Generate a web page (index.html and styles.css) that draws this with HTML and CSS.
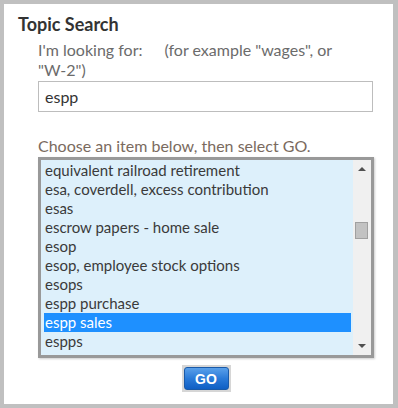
FILE: index.html
```html
<!DOCTYPE html>
<html lang="en">
<head>
    <meta charset="UTF-8">
    <title>Topic Search</title>
    <link rel="stylesheet" href="styles.css">
</head>
<body>
    <div class="panel">
        <h2 class="title">Topic Search</h2>
        <div class="form">
            <label class="label" for="topic">I'm looking for:<span class="hint">(for example "wages", or <span class="nowrap">"W-2")</span></span></label>
            <input type="text" id="topic" class="topic-input" value="espp">
            <div class="choose">Choose an item below, then select GO.</div>
            <div class="listbox">
                <div class="items">
                    <div class="item">equivalent railroad retirement</div>
                    <div class="item">esa, coverdell, excess contribution</div>
                    <div class="item">esas</div>
                    <div class="item">escrow papers - home sale</div>
                    <div class="item">esop</div>
                    <div class="item">esop, employee stock options</div>
                    <div class="item">esops</div>
                    <div class="item">espp purchase</div>
                    <div class="item selected">espp sales</div>
                    <div class="item">espps</div>
                </div>
                <div class="scrollbar">
                    <span class="arrow up"></span>
                    <span class="thumb"></span>
                    <span class="arrow down"></span>
                </div>
            </div>
            <div class="actions">
                <span class="go-wrap"><button class="go">GO</button></span>
            </div>
        </div>
    </div>
</body>
</html>
```

FILE: styles.css
```css
body {
    margin: 0;
    background-color: #c0c0c0;
    font-family: Lato, "Open Sans", sans-serif;
    font-size: 16px;
}
.panel {
    margin: 4px 5px 4px 4px;
    height: 400px;
    background-color: #fff;
    padding: 10px 0 0 14px;
    box-sizing: border-box;
}
.title {
    margin: 0;
    font-size: 18px;
    font-weight: bold;
    line-height: 20px;
    color: #333;
}
.form {
    margin: 6px 0 0 20px;
    width: 336px;
}
.label {
    display: block;
    line-height: 20px;
    color: #6b6b6b;
}
.hint {
    margin-left: 22px;
}
.nowrap {
    white-space: nowrap;
}
.topic-input {
    display: block;
    width: 335px;
    height: 31px;
    margin-top: 1px;
    box-sizing: border-box;
    border: 1px solid #bdbdbd;
    padding: 0 6px;
    font-family: inherit;
    font-size: 16px;
    color: #333;
    outline: none;
}
.choose {
    margin-top: 24px;
    line-height: 20px;
    color: #7a6a5e;
}
.listbox {
    display: flex;
    margin-top: 1px;
    width: 336px;
    height: 201px;
    box-sizing: border-box;
    border: 3px solid #999;
    background-color: #ddf0fb;
    box-shadow: 1px 1px 2px rgba(0, 0, 0, 0.2);
}
.items {
    flex: 1;
    padding: 1px 2px 0 3px;
    overflow: hidden;
}
.item {
    height: 19px;
    line-height: 19px;
    padding-left: 1px;
    font-size: 15px;
    color: #3a3a3a;
    white-space: nowrap;
}
.item.selected {
    background-color: #1e90ff;
    color: #fff;
}
.scrollbar {
    position: relative;
    width: 18px;
    background-color: #f0f0f0;
}
.arrow {
    position: absolute;
    left: 5px;
    width: 0;
    height: 0;
    border-left: 4px solid transparent;
    border-right: 4px solid transparent;
}
.arrow.up {
    top: 7px;
    border-bottom: 4px solid #505050;
}
.arrow.down {
    bottom: 7px;
    border-top: 4px solid #505050;
}
.thumb {
    position: absolute;
    left: 2px;
    top: 62px;
    width: 11px;
    height: 15px;
    background-color: #c2c2c2;
    border: 1px solid #a0a0a0;
}
.actions {
    text-align: center;
    margin-top: 7px;
}
.go-wrap {
    display: inline-block;
    padding: 2px;
    background-color: #d6d6d6;
    line-height: 0;
}
.go {
    width: 45px;
    height: 23px;
    border: 1px solid #1a5aa8;
    border-radius: 3px;
    background: linear-gradient(#5aa0ea, #2a7ad8 50%, #0f5fc4);
    color: #fff;
    font-family: "Liberation Sans", Arial, sans-serif;
    font-size: 14px;
    font-weight: bold;
    padding: 0;
    cursor: pointer;
}
```
